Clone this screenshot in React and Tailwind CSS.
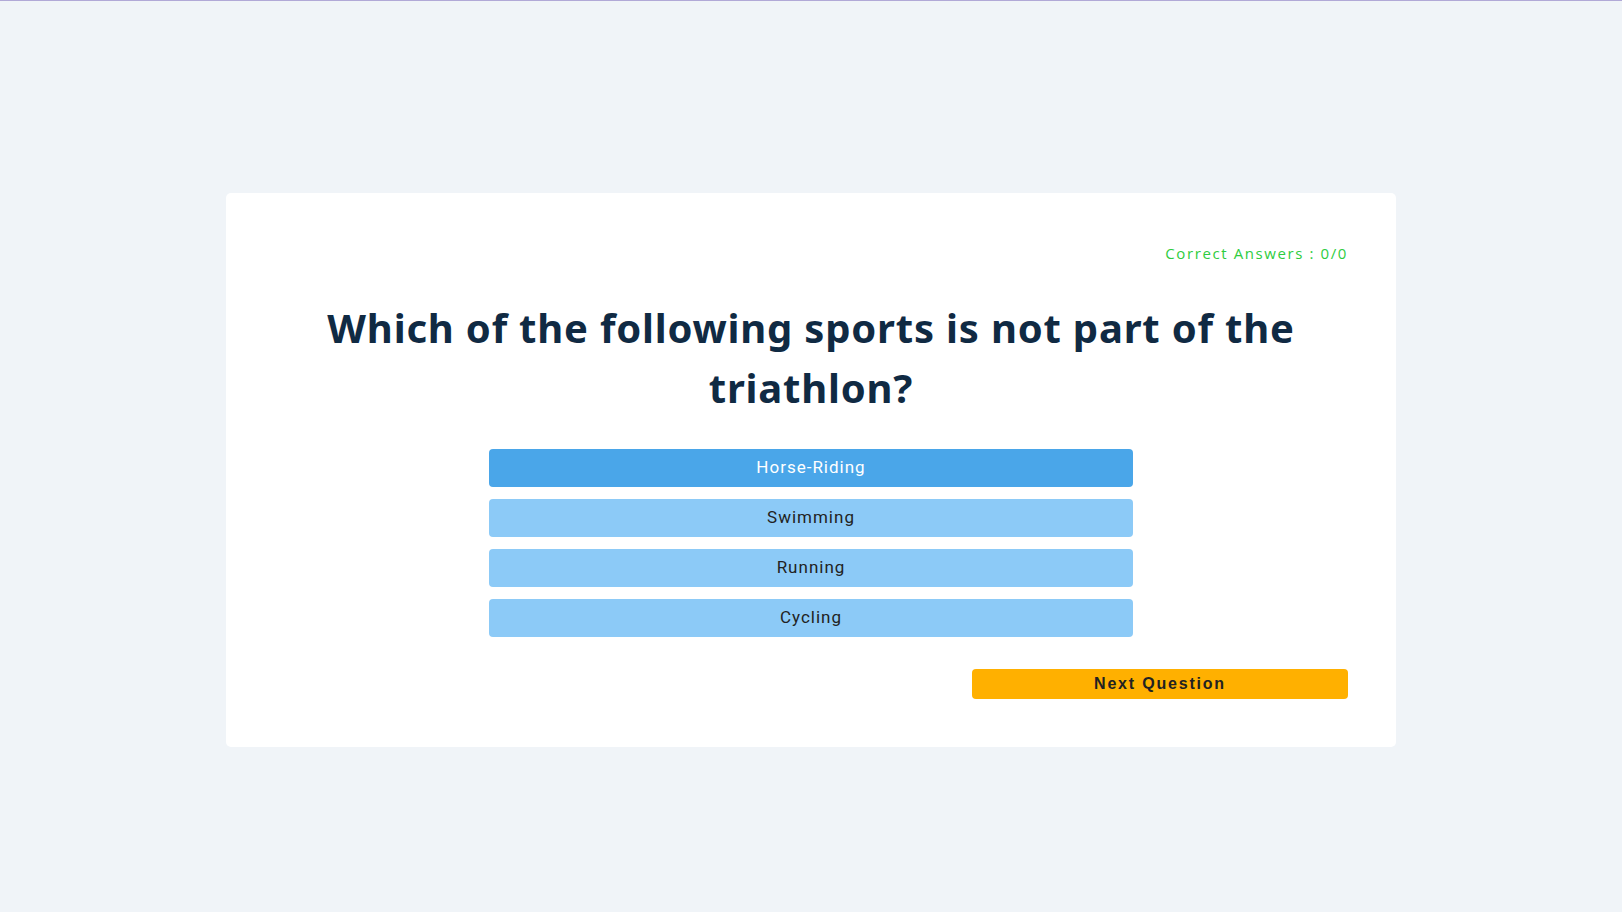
export default function App() {
  const answers = ["Horse-Riding", "Swimming", "Running", "Cycling"];
  const selected = 0;

  return (
    <div className="min-h-screen bg-[#f0f4f8] border-t border-[#b1a9d7] pt-[192px] pb-10">
      <div className="mx-auto w-[1170px] bg-white rounded-[5px] px-12 pt-12 pb-12">
        {/* Score */}
        <div className="flex justify-end">
          <span className="text-[15px] leading-6 tracking-[1.6px] text-[#2ecc40] font-['Open_Sans',sans-serif]">
            Correct Answers : 0/0
          </span>
        </div>

        {/* Question */}
        <h1 className="mt-[33px] text-center text-[40px] leading-[60px] font-bold tracking-[0.8px] text-[#102a43] font-['Noto_Sans',sans-serif]">
          Which of the following sports is not part of the triathlon?
        </h1>

        {/* Answers */}
        <div className="mx-auto mt-[31px] w-[644px] flex flex-col gap-[12.5px]">
          {answers.map((a, i) => (
            <button
              key={a}
              className={
                i === selected
                  ? "h-[37.5px] rounded-[4px] bg-[#4aa6e9] text-white text-[17px] font-normal tracking-[1px] font-['Roboto',sans-serif]"
                  : "h-[37.5px] rounded-[4px] bg-[#8ccaf7] text-[#222] text-[17px] font-normal tracking-[1px] font-['Roboto',sans-serif]"
              }
            >
              {a}
            </button>
          ))}
        </div>

        {/* Next */}
        <div className="flex justify-end mt-8">
          <button className="w-[376px] h-[30px] rounded-[4px] bg-[#ffb000] text-[#222] text-[16px] font-bold tracking-[1.8px] font-['Liberation_Sans',Arial,sans-serif]">
            Next Question
          </button>
        </div>
      </div>
    </div>
  );
}
